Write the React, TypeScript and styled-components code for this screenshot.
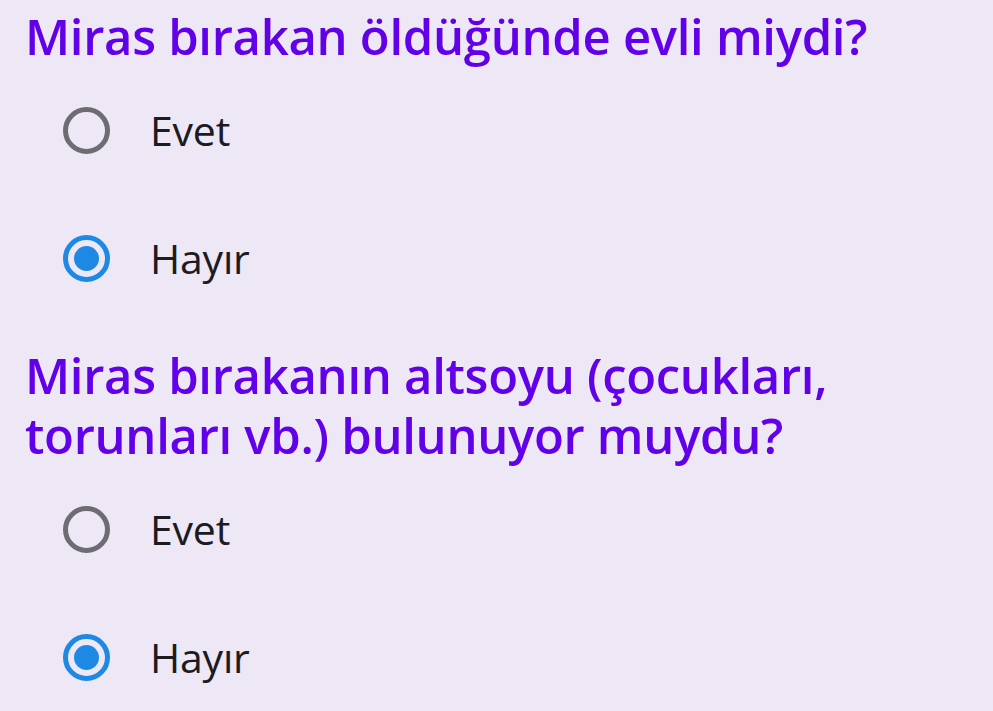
import React, { useState } from "react";
import styled, { createGlobalStyle } from "styled-components";

const Global = createGlobalStyle`
  html, body {
    margin: 0;
    padding: 0;
    background: #ede7f6;
  }
  body {
    font-family: "Open Sans", "Noto Sans", sans-serif;
  }
`;

const Page = styled.div`
  width: 993px;
  height: 711px;
  overflow: hidden;
  box-sizing: border-box;
  padding: 0 0 0 25px;
  background: #ede7f6;
`;

const Question = styled.section`
  display: flex;
  flex-direction: column;
  & + & {
    margin-top: 17px;
  }
`;

const Heading = styled.h2`
  margin: 0;
  font-family: "Open Sans", "Noto Sans", sans-serif;
  font-weight: 600;
  font-size: 49px;
  line-height: 60px;
  color: #6200ea;
  letter-spacing: -0.3px;
  padding-top: 6px;
`;

const Group = styled.div`
  display: flex;
  flex-direction: column;
`;

const Row = styled.label`
  display: flex;
  align-items: center;
  height: 128px;
  gap: 40px;
  padding-left: 38px;
  cursor: pointer;
`;

const Circle = styled.span<{ $checked: boolean }>`
  box-sizing: border-box;
  width: 47px;
  height: 47px;
  border-radius: 50%;
  border: 5px solid ${(p) => (p.$checked ? "#1e88e5" : "#6f6b72")};
  display: flex;
  align-items: center;
  justify-content: center;
  flex: none;
`;

const Dot = styled.span`
  width: 25px;
  height: 25px;
  border-radius: 50%;
  background: #1e88e5;
`;

const Label = styled.span`
  font-family: "Open Sans", "Noto Sans", sans-serif;
  font-size: 41px;
  color: #1c1b1f;
  letter-spacing: -0.2px;
`;

function RadioQuestion({ title, initial }: { title: React.ReactNode; initial: string }) {
  const [value, setValue] = useState(initial);
  return (
    <Question>
      <Heading>{title}</Heading>
      <Group role="radiogroup">
        {["Evet", "Hayır"].map((opt) => (
          <Row key={opt} onClick={() => setValue(opt)}>
            <Circle $checked={value === opt}>{value === opt && <Dot />}</Circle>
            <Label>{opt}</Label>
          </Row>
        ))}
      </Group>
    </Question>
  );
}

export default function App() {
  return (
    <Page>
      <Global />
      <RadioQuestion title="Miras bırakan öldüğünde evli miydi?" initial="Hayır" />
      <RadioQuestion
        title={
          <>
            Miras bırakanın altsoyu (çocukları,
            <br />
            torunları vb.) bulunuyor muydu?
          </>
        }
        initial="Hayır"
      />
    </Page>
  );
}
